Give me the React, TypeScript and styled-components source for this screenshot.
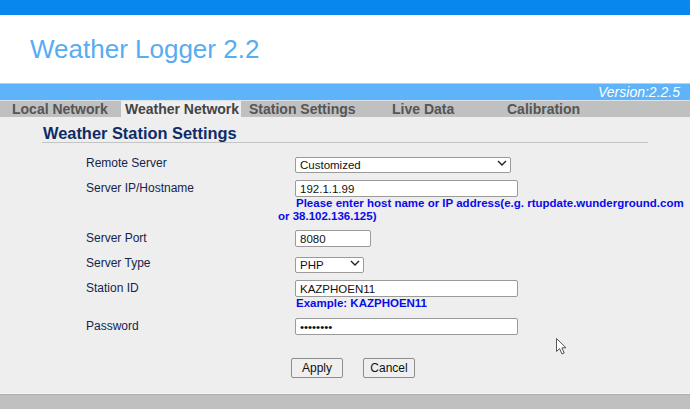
import React from "react";
import styled, { createGlobalStyle } from "styled-components";

type TabData = {
  label: string;
  w: number;
  pad: number;
  active?: boolean;
};

const tabs: TabData[] = [
  { label: "Local Network", w: 113, pad: 4 },
  { label: "Weather Network", w: 120, pad: 4, active: true },
  { label: "Station Settings", w: 147, pad: 8 },
  { label: "Live Data", w: 115, pad: 4 },
  { label: "Calibration", w: 120, pad: 4 },
];

const Chevron = () => (
  <ChevronIcon width="10" height="6" viewBox="0 0 10 6">
    <path d="M1 1l4 4 4-4" stroke="#222" strokeWidth="1.4" fill="none" />
  </ChevronIcon>
);

const Select: React.FC<{ width: number; value: string }> = ({ width, value }) => (
  <SelectWrap $w={width}>
    <SelectBox defaultValue={value}>
      <option>{value}</option>
    </SelectBox>
    <Chevron />
  </SelectWrap>
);

const App: React.FC = () => {
  return (
    <Page>
      <GlobalStyle />
      <TopBar />
      <Header>
        <Title>Weather Logger 2.2</Title>
      </Header>
      <VersionBar>Version:2.2.5</VersionBar>
      <TabBar>
        {tabs.map((t) => (
          <Tab key={t.label} $w={t.w} $pad={t.pad} $active={t.active}>
            {t.label}
          </Tab>
        ))}
      </TabBar>
      <Content>
        <Heading>Weather Station Settings</Heading>
        <Form>
          <Row>
            <Label>Remote Server</Label>
            <Field>
              <Select width={216} value="Customized" />
            </Field>
          </Row>
          <Row>
            <Label>Server IP/Hostname</Label>
            <Field>
              <Input $w={223} defaultValue="192.1.1.99" />
              <Help>
                Please enter host name or IP address(e.g. rtupdate.wunderground.com
                <br />
                or 38.102.136.125)
              </Help>
            </Field>
          </Row>
          <Row>
            <Label>Server Port</Label>
            <Field>
              <Input $w={76} defaultValue="8080" />
            </Field>
          </Row>
          <Row>
            <Label>Server Type</Label>
            <Field>
              <Select width={69} value="PHP" />
            </Field>
          </Row>
          <Row>
            <Label>Station ID</Label>
            <Field>
              <Input $w={223} defaultValue="KAZPHOEN11" />
              <Hint>Example: KAZPHOEN11</Hint>
            </Field>
          </Row>
          <Row>
            <Label>Password</Label>
            <Field>
              <Input $w={223} type="password" defaultValue="weather1" />
            </Field>
          </Row>
          <ButtonRow>
            <span />
            <Buttons>
              <Button>Apply</Button>
              <Button>Cancel</Button>
            </Buttons>
          </ButtonRow>
        </Form>
      </Content>
      <Footer />
      <Cursor width="12" height="18" viewBox="0 0 12 18">
        <path
          d="M0.5 0.5 L0.5 13.5 L3.6 10.6 L6 16 L8.2 15 L5.9 9.8 L10 9.8 Z"
          fill="#fff"
          stroke="#555"
          strokeWidth="1"
        />
      </Cursor>
    </Page>
  );
};

export default App;

// Styled Components

const GlobalStyle = createGlobalStyle`
  html, body {
    margin: 0;
    padding: 0;
  }
  body {
    background: #c0c0c0;
    font-family: "Liberation Sans", Arial, sans-serif;
    overflow: hidden;
  }
`;

const Page = styled.div`
  position: relative;
  width: 690px;
  height: 409px;
  display: flex;
  flex-direction: column;
  overflow: hidden;
`;

const TopBar = styled.div`
  height: 15px;
  background: #0888ee;
`;

const Header = styled.header`
  height: 69px;
  background: #fff;
  display: flex;
  align-items: center;
  padding-left: 30px;
  box-sizing: border-box;
  border-bottom: 1px solid #a9d4fb;
`;

const Title = styled.h1`
  margin: 0;
  font-size: 26px;
  line-height: 30px;
  font-weight: 400;
  color: #58acf1;
`;

const VersionBar = styled.div`
  height: 16px;
  background: #5fb3f9;
  color: #fff;
  font-style: italic;
  font-size: 14px;
  line-height: 16px;
  text-align: right;
  padding-right: 10px;
`;

const TabBar = styled.nav`
  height: 17px;
  background: #c0c0c0;
  border-top: 1px solid #d8e4ee;
  display: flex;
  padding-left: 8px;
  box-sizing: border-box;
`;

const Tab = styled.div<{ $w: number; $pad: number; $active?: boolean }>`
  width: ${(p) => p.$w}px;
  padding-left: ${(p) => p.$pad}px;
  box-sizing: border-box;
  font-size: 14px;
  font-weight: 700;
  line-height: 16px;
  color: ${(p) => (p.$active ? "#444" : "#555")};
  background: ${(p) => (p.$active ? "#eeeeee" : "transparent")};
  white-space: nowrap;
`;

const Content = styled.main`
  height: 276px;
  background: #edeeed;
  padding: 8px 0 0 42px;
  box-sizing: border-box;
`;

const Heading = styled.h2`
  margin: 0;
  width: 605px;
  font-size: 16.4px;
  line-height: 17px;
  font-weight: 700;
  color: #0f2c66;
  border-bottom: 1px solid #c4c4c4;
  padding-left: 1px;
`;

const Form = styled.div`
  margin: 12px 0 0 44px;
`;

const Row = styled.div`
  display: grid;
  grid-template-columns: 209px 1fr;
  margin-bottom: 8px;
`;

const Label = styled.div`
  font-size: 12px;
  line-height: 17px;
  color: #15244e;
`;

const Field = styled.div`
  display: flex;
  flex-direction: column;
  align-items: flex-start;
`;

const Input = styled.input<{ $w: number }>`
  width: ${(p) => p.$w}px;
  height: 17px;
  box-sizing: border-box;
  margin: 0;
  padding: 0 4px;
  border: 1px solid #9a9a9a;
  border-radius: 2px;
  background: #fff;
  font-family: "Liberation Sans", Arial, sans-serif;
  font-size: 11.5px;
  color: #111;
  outline: none;
`;

const SelectWrap = styled.div<{ $w: number }>`
  position: relative;
  width: ${(p) => p.$w}px;
  height: 16px;
`;

const SelectBox = styled.select`
  appearance: none;
  width: 100%;
  height: 16px;
  box-sizing: border-box;
  margin: 0;
  padding: 0 4px;
  border: 1px solid #9a9a9a;
  border-radius: 2px;
  background: #fff;
  font-family: "Liberation Sans", Arial, sans-serif;
  font-size: 11.5px;
  line-height: 14px;
  color: #111;
  outline: none;
`;

const ChevronIcon = styled.svg`
  position: absolute;
  right: 4px;
  top: 5px;
  pointer-events: none;
`;

const Help = styled.div`
  margin-left: -17px;
  text-indent: 18px;
  font-size: 11.5px;
  line-height: 12.5px;
  font-weight: 700;
  color: #0a0aee;
  white-space: nowrap;
`;

const Hint = styled.div`
  font-size: 11.5px;
  line-height: 13px;
  font-weight: 700;
  color: #0a0aee;
  padding-left: 1px;
`;

const ButtonRow = styled.div`
  display: grid;
  grid-template-columns: 209px 1fr;
  margin-top: 23px;
`;

const Buttons = styled.div`
  display: flex;
  gap: 20px;
  margin-left: -4px;
`;

const Button = styled.button`
  width: 52px;
  height: 20px;
  padding: 0;
  border: 1px solid #8d8d8d;
  border-radius: 2px;
  background: #efefef;
  font-family: "Liberation Sans", Arial, sans-serif;
  font-size: 12px;
  color: #111;
`;

const Footer = styled.footer`
  flex: 1;
  background: #c0c0c0;
  border-top: 1px solid #f6f6f6;
  box-shadow: inset 0 1px 0 #aeaeae;
`;

const Cursor = styled.svg`
  position: absolute;
  left: 556px;
  top: 338px;
`;
